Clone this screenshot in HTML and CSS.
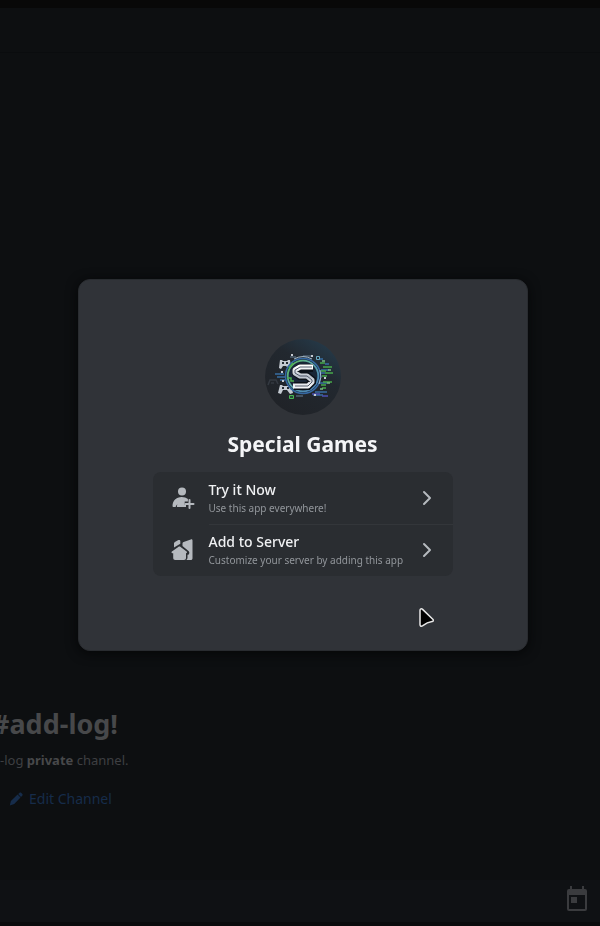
FILE: index.html
```html
<!DOCTYPE html>
<html lang="en">
<head>
<meta charset="utf-8">
<meta name="viewport" content="width=device-width, initial-scale=1">
<title>Special Games</title>
<link rel="stylesheet" href="styles.css">
</head>
<body>
<div class="page">
  <div class="titlebar"></div>
  <header class="toolbar"></header>
  <main class="channel">
    <h1 class="channel-title">#add-log!</h1>
    <p class="channel-text">-log <strong>private</strong> channel.</p>
    <a class="edit" href="#">
      <svg width="14" height="14" viewBox="0 0 14 14" aria-hidden="true"><path fill="currentColor" d="M9.200 2 10.400.9c.6-.6 1.300-.6 1.900 0l.9.9c.6.6.6 1.300 0 1.900L12 4.900zM8.600 2.500l2.900 2.900-6.300 6.500L.8 13.400 1.900 9.100z"/></svg>
      Edit Channel
    </a>
  </main>
  <footer class="composer">
    <svg width="22" height="26" viewBox="0 0 22 26" aria-hidden="true"><path fill="currentColor" fill-rule="evenodd" d="M4 0h2v3h10V0h2v3h1a2 2 0 0 1 2 2v18a2 2 0 0 1-2 2H3a2 2 0 0 1-2-2V5a2 2 0 0 1 2-2h1zM3 9v14h16V9zM5 11h6v6H5z"/></svg>
  </footer>
</div>

<div class="overlay">
  <section class="dialog" role="dialog" aria-modal="true" aria-labelledby="app-name">
    <svg class="avatar" viewBox="0 0 76 76" aria-hidden="true">
      <defs>
        <linearGradient id="disc" x1="0.2" y1="0.9" x2="0.8" y2="0">
          <stop offset="0" stop-color="#202328"/><stop offset="0.6" stop-color="#22282f"/><stop offset="1" stop-color="#253b4b"/>
        </linearGradient>
        <linearGradient id="ring" x1="0" y1="0" x2="1" y2="1">
          <stop offset="0" stop-color="#58b94a"/><stop offset="0.4" stop-color="#5da9a6"/><stop offset="1" stop-color="#4477b8"/>
        </linearGradient>
        <linearGradient id="metal" x1="0" y1="0" x2="0" y2="1">
          <stop offset="0" stop-color="#ffffff"/><stop offset="0.5" stop-color="#b9bfca"/><stop offset="1" stop-color="#f2f4f7"/>
        </linearGradient>
      </defs>
      <circle cx="38" cy="38" r="38" fill="url(#disc)"/>
      <g fill="none" stroke-width="1.500">
        <path stroke="#376da2" d="M10 35h9M12 38h8M15 41h5M53 20h5M56 31h8M54 34h6M54 44h8M50 53h12M48 56h10M60 25h4"/>
        <path stroke="#4d50b2" d="M47 55h8M57 57h6"/>
        <path stroke="#47a94b" d="M55 24h5M58 28h9M56 32h5M60 34h8M57 37h5M58 43h9M56 46h5M57 49h4M22 40h5"/>
        <path stroke="#78bc85" d="M63 31h3M62 44h3M57 22h3M55 50h3"/>
        <path stroke="#506273" d="M25 18h6M38 17h8M31 57h7"/>
      </g>
      <g fill="#c5cbd2">
        <path d="M15 21h2l1 1h4l1-1h2l1 8-2 1-3-3h-3l-2 3-2-1zM15 46h2l1 1h5l1-1h2l2 8-3 1-3-4h-4l-2 4-3-1z"/>
        <path d="M26 15h2v2h-2zM16 32h2v2h-2zM17 41h2v2h-2zM46 16h2v2h-2zM59 38h2v2h-2zM49 55h2v2h-2z"/>
      </g>
      <path fill="#252c33" d="M17 23h2v2h-2zM21 23h2v2h-2zM17 48h2v2h-2zM22 48h2v2h-2z"/>
      <path fill="none" stroke="#343a42" stroke-width="1.500" d="m3 46 2-5h6l2 4M6 44h3"/>
      <path fill="#202b34" stroke="#6aabc2" d="M51.500 17.500h3v3h-3z"/>
      <path fill="#254d36" stroke="#48b552" d="M24.500 56.500h4v3h-4z"/>
      <circle cx="38" cy="37" r="17.500" fill="#192536" stroke="#3568a2" stroke-width="1.500"/>
      <circle cx="38" cy="37" r="15.300" fill="none" stroke="url(#ring)" stroke-width="1.800"/>
      <path fill="none" stroke="#a8bccb" d="M29 20a19 19 0 0 1 18 0M55 31a18.500 18.500 0 0 1-1 14"/>
      <path fill="none" stroke="#0c1119" stroke-width="8" d="M48 29H35l-4 3v2l4 3h7l5 4v2l-4 4H29"/>
      <path fill="none" stroke="url(#metal)" stroke-width="5" stroke-linejoin="round" d="M48 28H35l-5 3v3l5 3h7l5 4v2l-4 4H28"/>
      <path fill="none" stroke="#525b6b" d="M47 28H35l-5 3v3l5 3h7l5 4v2l-4 4H30"/>
      <path fill="none" stroke="#4cae4e" stroke-width="1.500" d="M22 39h4v3h3M24 29l4-5"/>
    </svg>
    <h2 class="app-name" id="app-name">Special Games</h2>
    <div class="options">
      <button class="option" type="button">
        <svg class="icon" viewBox="0 0 24 24" aria-hidden="true"><g fill="currentColor"><circle cx="11" cy="5.500" r="4"/><path d="M1.500 20c.2-5.500 3.600-9 9.200-9 2.500 0 4.700.7 6.200 2v2.500h-3.200v3.200H15V21H6.200c-.4 0-.4-1.200.2-2.800-.9.700-1.500 1.700-1.800 2.800H2.300c-.5 0-.8-.4-.8-1z"/></g><path fill="none" stroke="currentColor" stroke-width="2" stroke-linecap="round" d="M18.500 14v8M14.500 18h8"/></svg>
        <span class="copy"><span class="label">Try it Now</span><span class="hint">Use this app everywhere!</span></span>
        <svg class="chevron" viewBox="0 0 12 16" aria-hidden="true"><path d="m3 2 6 6-6 6"/></svg>
      </button>
      <button class="option" type="button">
        <svg class="icon" viewBox="0 0 24 24" aria-hidden="true"><g fill="currentColor"><path d="M3 8V5.500c0-.7.3-1.200.9-1.600l3.500-1.800c1-.5 1.900 0 1.900 1v2.700L3 9.500z"/><path d="M11.500 5.500c0-.8.400-1.300 1.100-1.500l7.200-2.600c1-.3 1.700.2 1.700 1.200v17.600c0 1-.7 1.800-1.700 1.800h-4.500c.8-.6 1.200-1.300 1.200-2.300v-2.900c1.900-.2 2.500-2.600 1-3.900l-6-4.800z"/><path d="M7.300 9c.8-.6 1.500-.6 2.300 0l6 4.600c.8.700.4 1.600-.6 1.600v4.800c0 1.200-.8 2-2 2H4.200c-1.200 0-2-.8-2-2v-4.800h-.7c-1 0-1.400-1-.6-1.600z"/></g></svg>
        <span class="copy"><span class="label">Add to Server</span><span class="hint">Customize your server by adding this app</span></span>
        <svg class="chevron" viewBox="0 0 12 16" aria-hidden="true"><path d="m3 2 6 6-6 6"/></svg>
      </button>
    </div>
    <svg class="cursor" viewBox="0 0 18 22" aria-hidden="true"><path d="M2 3.500c0-1.800 1.400-2.300 2.600-1.100l10.200 9.800c1 1 .5 2.100-.8 2.300-3.400.5-5.800 1.500-9.200 4.200C3.300 19.800 2 19.300 2 17.500z"/></svg>
  </section>
</div>
</body>
</html>
```

FILE: styles.css
```css
* {
  box-sizing: border-box;
}

body {
  margin: 0;
  background: #0d0f11;
  color: #47484a;
  font-family: "Noto Sans", sans-serif;
}

h1, h2, p {
  margin: 0;
}

.page {
  display: flex;
  flex-direction: column;
  min-height: 100vh;
  overflow: hidden;
}

.titlebar {
  height: 8px;
  background: #080808;
}

.toolbar {
  height: 45px;
  border-bottom: 1px solid #0a0c0e;
}

.channel {
  flex: 1;
  display: flex;
  flex-direction: column;
  justify-content: flex-end;
  align-items: flex-start;
  padding-bottom: 70px;
}

.channel-title {
  margin-left: -8px;
  font-size: 27px;
  line-height: 36px;
  font-weight: 700;
}

.channel-text {
  margin-top: 8px;
  font-size: 13px;
  line-height: 20px;
  color: #3e3f42;
}

.channel-text strong {
  color: #47484a;
}

.edit {
  display: flex;
  align-items: center;
  gap: 6px;
  margin: 18px 0 0 9px;
  font-size: 14px;
  line-height: 22px;
  color: #162c4a;
  text-decoration: none;
}

.composer {
  display: flex;
  justify-content: flex-end;
  align-items: center;
  height: 46px;
  padding: 0 12px 4px 0;
  background: #0f1114;
  border-bottom: 4px solid #0a0b0d;
  color: #3a3b3e;
}

.overlay {
  position: fixed;
  inset: 0;
  display: grid;
  place-items: center;
  padding: 4px 0 0 5px;
}

.dialog {
  position: relative;
  display: flex;
  flex-direction: column;
  align-items: center;
  width: min(450px, 94%);
  padding: 59px 74px 74px;
  border: 1px solid #292c30;
  border-radius: 12px;
  background: #303338;
  box-shadow: 0 2px 12px #050607;
}

.avatar {
  width: 76px;
  height: 76px;
}

.app-name {
  margin: 13px 0 12px;
  font-size: 21px;
  line-height: 32px;
  font-weight: 700;
  color: #f4f5f7;
}

.options {
  align-self: stretch;
  border-radius: 8px;
  background: #2a2d31;
  overflow: hidden;
}

.option {
  position: relative;
  display: flex;
  align-items: center;
  width: 100%;
  height: 52px;
  padding: 0 20px 0 18px;
  border: 0;
  background: none;
  font: inherit;
  text-align: left;
  color: #b5b9be;
}

.option + .option::before {
  content: "";
  position: absolute;
  top: 0;
  left: 56px;
  right: 0;
  height: 1px;
  background: #33363a;
}

.icon {
  flex: none;
  width: 24px;
  height: 24px;
}

.copy {
  flex: 1;
  display: flex;
  flex-direction: column;
  margin-left: 14px;
  white-space: nowrap;
}

.label {
  font-size: 14px;
  line-height: 20px;
  font-weight: 500;
  color: #f0f1f3;
}

.hint {
  font-size: 10px;
  line-height: 16px;
  color: #92969b;
}

.chevron {
  flex: none;
  width: 12px;
  height: 16px;
  fill: none;
  stroke: #b5b9be;
  stroke-width: 2;
  stroke-linecap: round;
  stroke-linejoin: round;
}

.cursor {
  position: absolute;
  right: 91px;
  bottom: 21px;
  width: 18px;
  height: 22px;
  fill: #000;
  stroke: #e8e8e8;
  stroke-width: 1.5;
}
```
